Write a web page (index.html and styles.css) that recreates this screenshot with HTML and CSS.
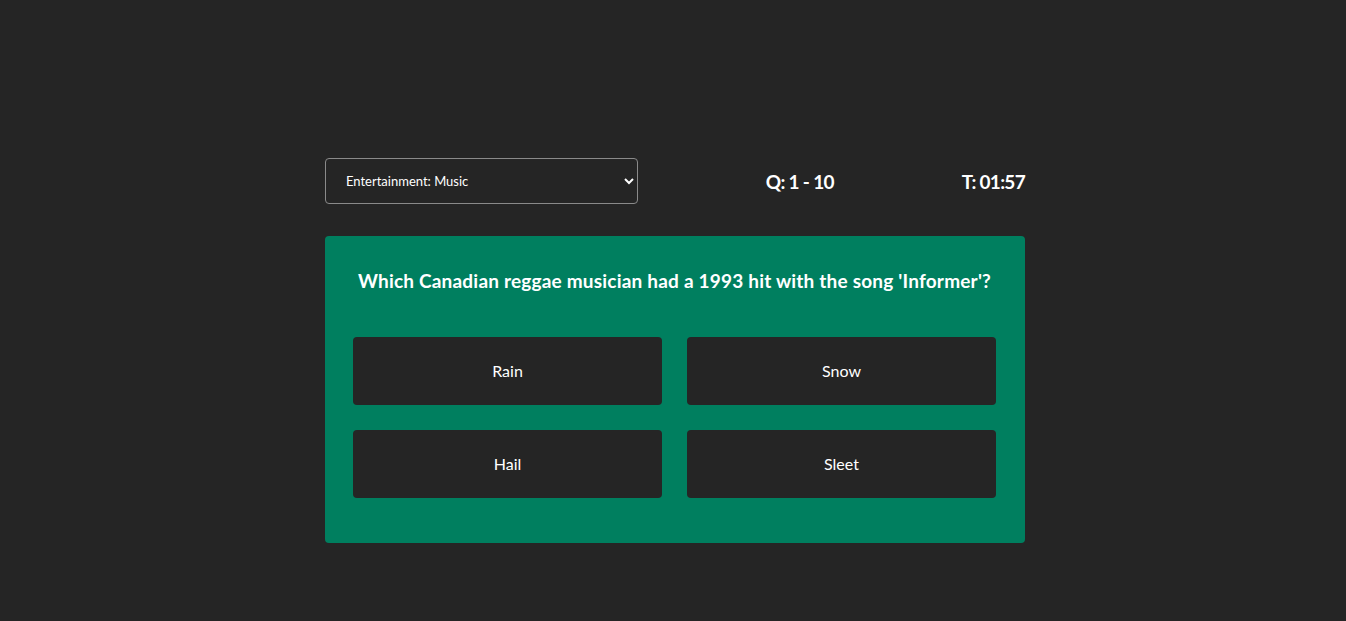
FILE: index.html
```html
<!DOCTYPE html>
<html lang="en">
<head>
<meta charset="utf-8">
<title>Quiz</title>
<link rel="stylesheet" href="styles.css">
</head>
<body>
<main class="quiz">
  <header class="bar">
    <select class="category">
      <option>Entertainment: Music</option>
    </select>
    <div class="stat">Q: 1 - 10</div>
    <div class="stat">T: 01:57</div>
  </header>
  <section class="card">
    <h1 class="question">Which Canadian reggae musician had a 1993 hit with the song 'Informer'?</h1>
    <div class="answers">
      <button class="answer">Rain</button>
      <button class="answer">Snow</button>
      <button class="answer">Hail</button>
      <button class="answer">Sleet</button>
    </div>
  </section>
</main>
</body>
</html>
```
FILE: styles.css
```css
html, body {
  margin: 0;
  padding: 0;
  background: #252525;
  color: #ffffff;
  font-family: "Lato", "Noto Sans", sans-serif;
}
body {
  padding-left: 4px;
}
.quiz {
  width: 700px;
  margin: 0 auto;
  padding-top: 158px;
}
.bar {
  display: flex;
  justify-content: space-between;
  align-items: center;
  height: 46px;
}
.category {
  width: 313px;
  height: 46px;
  background: #252525;
  color: #ffffff;
  border: 1px solid #8a8a8a;
  border-radius: 4px;
  padding: 0 10px 0 16px;
  font-family: inherit;
  font-size: 13px;
}
.stat {
  font-size: 19px;
  font-weight: 700;
  letter-spacing: -0.7px;
}
.card {
  margin-top: 32px;
  background: #007f5f;
  border-radius: 4px;
  padding: 30px 29px 45px 28px;
}
.question {
  margin: 0 0 41px;
  text-align: center;
  font-size: 19px;
  font-weight: 700;
  letter-spacing: 0.2px;
  line-height: 30px;
}
.answers {
  display: grid;
  grid-template-columns: 1fr 1fr;
  gap: 25px;
}
.answer {
  height: 68px;
  padding: 0 0 2px;
  background: #252525;
  color: #ffffff;
  border: none;
  border-radius: 4px;
  font-family: inherit;
  font-size: 16px;
}
```
